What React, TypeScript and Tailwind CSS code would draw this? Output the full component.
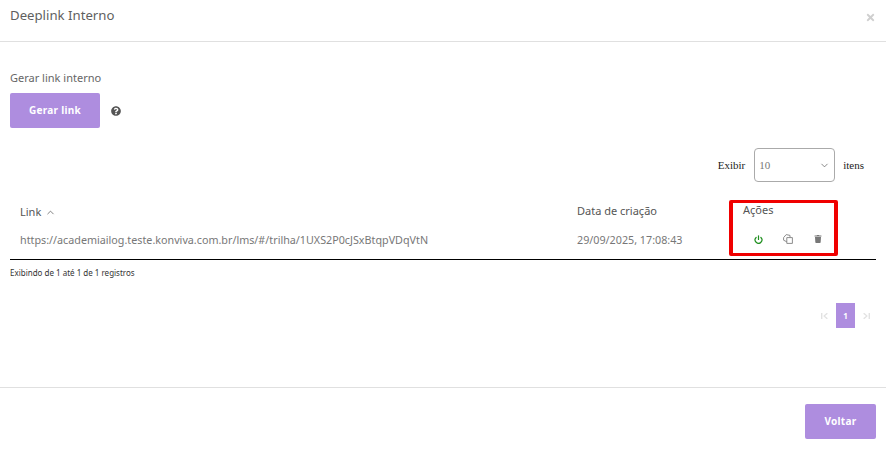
import { ChevronDown, ChevronUp, Power } from "lucide-react";
import { FaQuestionCircle, FaTimes, FaTrash } from "react-icons/fa";

const font = "font-['Noto_Sans','Open_Sans',sans-serif]";

function PageArrow({ dir }: { dir: "first" | "last" }) {
  return (
    <svg width="7" height="6" viewBox="0 0 7 6" className="text-[#e2e2e2]" fill="currentColor">
      {dir === "first" ? (
        <path d="M0 0h1.4v6H0zM6.5 0v1L4 3l2.5 2v1h-1L2.2 3l3.3-3z" />
      ) : (
        <path d="M7 0H5.600v6H7zM.5 0v1L3 3 .5 5v1h1l3.300-3L1.500 0z" />
      )}
    </svg>
  );
}

// dois documentos inclinados, um sobre o outro
function CopyIcon() {
  return (
    <svg width="10" height="10" viewBox="0 0 10 10" fill="none" stroke="#808080" strokeWidth="0.9">
      <path d="M3.800 7.800 L.6 6.200 V3.600 L3.200 .6 L7 1.400 V3.400" />
      <path d="M3.800 3.600 H9.400 V9.400 H3.800 Z" />
    </svg>
  );
}

export default function App() {
  return (
    <div className={`${font} relative flex h-[450px] w-[886px] flex-col overflow-hidden bg-white text-[#666]`}>
      <header className="flex h-[42px] shrink-0 items-start justify-between border-b border-[#e0e0e0] pl-[10px] pr-[10px]">
        <h1 className="mt-[5px] text-[13.2px] leading-[20px] text-[#5f5f5f]">Deeplink Interno</h1>
        <FaTimes className="mt-[12px] text-[11px] text-[#cfcfcf]" />
      </header>

      <main className="flex-1 px-[10px]">
        <p className="mt-[28px] text-[11px] leading-[16px] text-[#666]">Gerar link interno</p>
        <div className="mt-[7px] flex items-center gap-[11px]">
          <button className="h-[35px] w-[90px] rounded-[2px] bg-[#ae8ddf] text-[10px] font-bold tracking-[0.3px] text-white">
            Gerar link
          </button>
          <FaQuestionCircle className="text-[10px] text-[#555]" />
        </div>

        <div className="mt-[20px] flex h-[34px] items-center justify-end pr-[12px] font-['Liberation_Serif',serif] text-[11px] text-[#222]">
          <span>Exibir</span>
          <div className="ml-[9px] flex h-[34px] w-[81px] items-center justify-between rounded-[4px] border border-[#aaa] pl-[4px] pr-[4px] text-[#777]">
            <span>10</span>
            <ChevronDown size={11} strokeWidth={1.5} className="text-[#555]" />
          </div>
          <span className="ml-[8px]">itens</span>
        </div>

        <div className="grid h-[39px] grid-cols-[567px_166px_1fr] pt-[21px] text-[11px] leading-[16px] text-[#555]">
          <div className="flex items-start gap-[4px] pl-[10px]">
            <span className="mt-[1px]">Link</span>
            <ChevronUp size={11} strokeWidth={1.6} className="mt-[4px]" />
          </div>
          <div>Data de criação</div>
          <div className="-mt-[1px]">Ações</div>
        </div>
        <div className="grid h-[39px] grid-cols-[567px_166px_1fr] items-start border-b border-black pt-[11px] text-[10.75px] leading-[16px] text-[#777]">
          <div className="pl-[10px]">https://academiailog.teste.konviva.com.br/lms/#/trilha/1UXS2P0cJSxBtqpVDqVtN</div>
          <div>29/09/2025, 17:08:43</div>
          <div className="flex items-center pl-[11px] pt-[2px]">
            <Power size={9} strokeWidth={3.2} className="text-[#1f8f1f]" />
            <span className="ml-[20px] flex"><CopyIcon /></span>
            <FaTrash className="ml-[21px] text-[8px] text-[#777]" />
          </div>
        </div>

        <p className="mt-[7px] text-[8px] leading-[11px] text-[#333]">Exibindo de 1 até 1 de 1 registros</p>

        <nav className="mt-[25px] flex items-center justify-end gap-[8px] pr-[6px]">
          <PageArrow dir="first" />
          <span className="flex h-[25px] w-[19px] items-center justify-center bg-[#ae8ddf] text-[8px] font-bold text-white">1</span>
          <PageArrow dir="last" />
        </nav>
      </main>

      <footer className="flex h-[63px] shrink-0 items-start justify-end border-t border-[#e0e0e0] pr-[10px] pt-[16px]">
        <button className="h-[35px] w-[71px] rounded-[2px] bg-[#ae8ddf] text-[10px] font-bold tracking-[0.3px] text-white">
          Voltar
        </button>
      </footer>

      {/* destaque vermelho sobre a coluna de ações */}
      <div className="absolute left-[729px] top-[200px] h-[56px] w-[109px] rounded-[2px] border-x-[4px] border-y-[3px] border-[#f00000]" />
    </div>
  );
}
